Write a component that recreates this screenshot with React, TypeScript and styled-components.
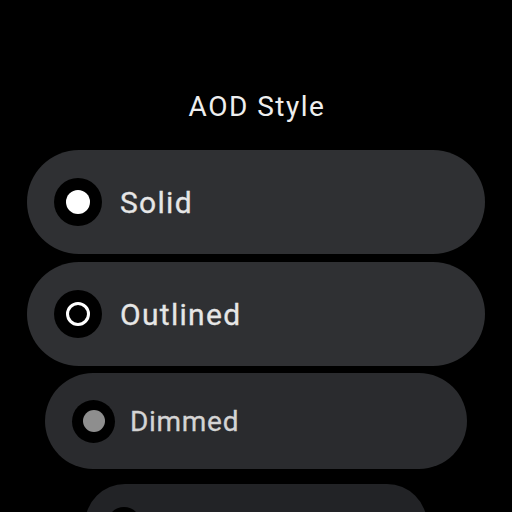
import styled, { createGlobalStyle } from "styled-components";

const Global = createGlobalStyle`
  html, body {
    margin: 0;
    padding: 0;
    background: #000;
  }
  body {
    font-family: Roboto, "Noto Sans", sans-serif;
  }
`;

const Screen = styled.div`
  width: 512px;
  height: 512px;
  overflow: hidden;
  background: #000;
  display: flex;
  flex-direction: column;
  align-items: center;
`;

const Title = styled.h1`
  margin: 88px 0 0;
  height: 38px;
  font-size: 28px;
  font-weight: 400;
  line-height: 38px;
  color: #eeeeee;
  letter-spacing: 1.5px;
  padding-left: 2px;
`;

const Chip = styled.div<{ $w: number; $h: number; $top: number; $bg: string; $pad: number; $gap: number }>`
  flex-shrink: 0;
  box-sizing: border-box;
  width: ${(p) => p.$w}px;
  height: ${(p) => p.$h}px;
  margin-top: ${(p) => p.$top}px;
  border-radius: ${(p) => p.$h / 2}px;
  background: ${(p) => p.$bg};
  padding-left: ${(p) => p.$pad}px;
  display: flex;
  align-items: center;
  gap: ${(p) => p.$gap}px;
`;

const Radio = styled.div<{ $size: number }>`
  flex-shrink: 0;
  width: ${(p) => p.$size}px;
  height: ${(p) => p.$size}px;
  border-radius: 50%;
  background: #000;
  display: flex;
  align-items: center;
  justify-content: center;
`;

const Dot = styled.div<{ $size: number; $kind: "solid" | "outline" | "dim" }>`
  box-sizing: border-box;
  width: ${(p) => p.$size}px;
  height: ${(p) => p.$size}px;
  border-radius: 50%;
  background: ${(p) => (p.$kind === "solid" ? "#ffffff" : p.$kind === "dim" ? "#8e8e8e" : "transparent")};
  border: ${(p) => (p.$kind === "outline" ? "3px solid #ffffff" : "none")};
`;

const Label = styled.span<{ $size: number; $color: string; $track: number }>`
  font-size: ${(p) => p.$size}px;
  font-weight: 400;
  color: ${(p) => p.$color};
  letter-spacing: ${(p) => p.$track}px;
  margin-top: 1px;
  -webkit-text-stroke: 0.3px ${(p) => p.$color};
`;

const items = [
  { label: "Solid", kind: "solid" as const, w: 458, h: 104, top: 24, bg: "#2f3033", pad: 27, gap: 18, r: 48, d: 24, fs: 30, track: 1.3, color: "#e6e6e6" },
  { label: "Outlined", kind: "outline" as const, w: 458, h: 104, top: 8, bg: "#2f3033", pad: 27, gap: 18, r: 48, d: 24, fs: 30, track: 1.3, color: "#e6e6e6" },
  { label: "Dimmed", kind: "dim" as const, w: 422, h: 96, top: 7, bg: "#2a2b2e", pad: 27, gap: 15, r: 43, d: 22, fs: 28, track: 0.7, color: "#d4d4d4" },
  { label: "", kind: "dim" as const, w: 342, h: 80, top: 15, bg: "#222326", pad: 22, gap: 12, r: 34, d: 16, fs: 22, track: 0.6, color: "#aaaaaa" },
];

export default function App() {
  return (
    <Screen>
      <Global />
      <Title>AOD Style</Title>
      {items.map((it, i) => (
        <Chip key={i} $w={it.w} $h={it.h} $top={it.top} $bg={it.bg} $pad={it.pad} $gap={it.gap}>
          <Radio $size={it.r}>
            <Dot $size={it.d} $kind={it.kind} />
          </Radio>
          {it.label && (
            <Label $size={it.fs} $color={it.color} $track={it.track}>
              {it.label}
            </Label>
          )}
        </Chip>
      ))}
    </Screen>
  );
}
